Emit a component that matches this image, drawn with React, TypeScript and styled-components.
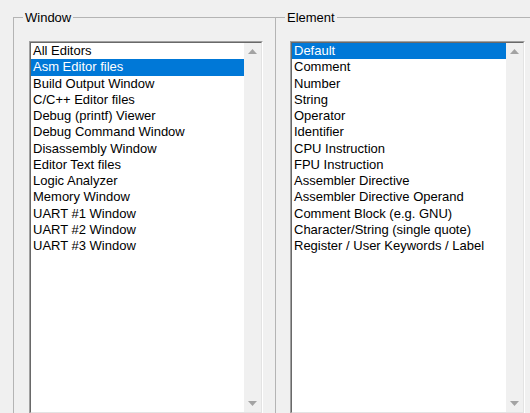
import React from "react";
import styled, { createGlobalStyle } from "styled-components";

const GlobalStyle = createGlobalStyle`
  html, body {
    margin: 0;
    padding: 0;
    background: #f0f0f0;
    overflow: hidden;
  }
  body {
    font-family: "Liberation Sans", Arial, sans-serif;
    font-size: 13px;
    color: #000;
  }
`;

const Page = styled.div`
  display: flex;
  align-items: flex-start;
  height: 413px;
  padding: 10px 0 0 13px;
  box-sizing: border-box;
  overflow: hidden;
`;

const Group = styled.fieldset<{ $width: number; $pad: number; $overlap?: boolean }>`
  flex: none;
  width: ${(p) => p.$width}px;
  box-sizing: border-box;
  margin: 0 0 0 ${(p) => (p.$overlap ? -1 : 0)}px;
  padding: 16px 0 0 ${(p) => p.$pad}px;
  border: 1px solid #b4b4b4;
  min-width: 0;
`;

/* the caption sits 9px in from the frame, whatever the group's padding */
const Caption = styled.legend<{ $pad: number }>`
  margin-left: ${(p) => 9 - p.$pad}px;
  padding: 0 2px;
  height: 15px;
  line-height: 15px;
`;

const ListBox = styled.div<{ $width: number }>`
  display: flex;
  width: ${(p) => p.$width}px;
  height: 373px;
  box-sizing: border-box;
  border: 1px solid;
  border-color: #a0a0a0 #ffffff #ffffff #a0a0a0;
  background: #fff;
`;

const InnerEdge = styled.div`
  display: flex;
  flex: 1;
  border: 1px solid;
  border-color: #696969 #e3e3e3 #e3e3e3 #696969;
  min-width: 0;
`;

const Items = styled.ul`
  list-style: none;
  margin: 0;
  padding: 0;
  flex: 1;
  min-width: 0;
`;

const Item = styled.li<{ $selected?: boolean }>`
  height: 16.25px;
  line-height: 16.25px;
  padding-left: 2px;
  white-space: nowrap;
  background: ${(p) => (p.$selected ? "#0078d7" : "transparent")};
  color: ${(p) => (p.$selected ? "#fff" : "#000")};
`;

const ScrollBar = styled.div`
  flex: none;
  width: 17px;
  background: #f0f0f0;
  display: flex;
  flex-direction: column;
  justify-content: space-between;
`;

const ScrollButton = styled.div`
  width: 17px;
  height: 17px;
  display: flex;
  align-items: center;
  justify-content: center;
`;

const Arrow = ({ down }: { down?: boolean }) => (
  <svg width="9" height="5" viewBox="0 0 9 5">
    <path
      d={down ? "M0 0 L9 0 L4.5 5 Z" : "M0 5 L9 5 L4.5 0 Z"}
      fill="#a3a3a3"
    />
  </svg>
);

type ListProps = { items: string[]; selected: number; width: number };

const List = ({ items, selected, width }: ListProps) => (
  <ListBox $width={width}>
    <InnerEdge>
      <Items>
        {items.map((t, i) => (
          <Item key={t} $selected={i === selected}>
            {t}
          </Item>
        ))}
      </Items>
      <ScrollBar>
        <ScrollButton>
          <Arrow />
        </ScrollButton>
        <ScrollButton>
          <Arrow down />
        </ScrollButton>
      </ScrollBar>
    </InnerEdge>
  </ListBox>
);

const windows = [
  "All Editors",
  "Asm Editor files",
  "Build Output Window",
  "C/C++ Editor files",
  "Debug (printf) Viewer",
  "Debug Command Window",
  "Disassembly Window",
  "Editor Text files",
  "Logic Analyzer",
  "Memory Window",
  "UART #1 Window",
  "UART #2 Window",
  "UART #3 Window",
];

const elements = [
  "Default",
  "Comment",
  "Number",
  "String",
  "Operator",
  "Identifier",
  "CPU Instruction",
  "FPU Instruction",
  "Assembler Directive",
  "Assembler Directive Operand",
  "Comment Block (e.g. GNU)",
  "Character/String (single quote)",
  "Register / User Keywords / Label",
];

export default function App() {
  return (
    <>
      <GlobalStyle />
      <Page>
        <Group $width={263} $pad={15}>
          <Caption $pad={15}>Window</Caption>
          <List items={windows} selected={1} width={234} />
        </Group>
        <Group $width={280} $pad={14} $overlap>
          <Caption $pad={14}>Element</Caption>
          <List items={elements} selected={0} width={235} />
        </Group>
      </Page>
    </>
  );
}
